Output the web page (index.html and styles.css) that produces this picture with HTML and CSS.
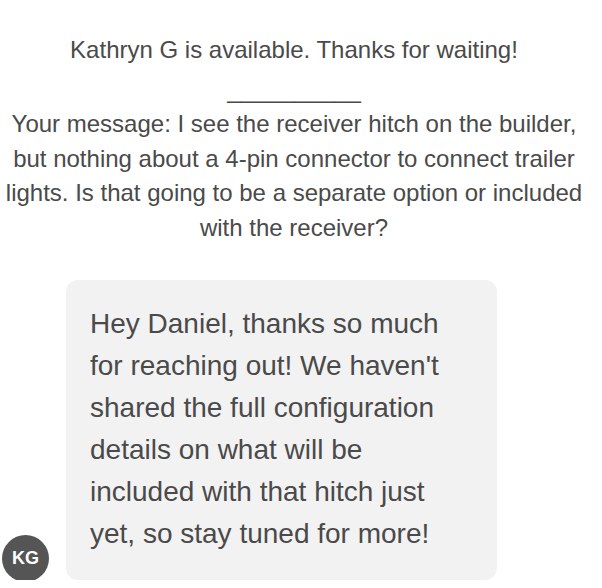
FILE: index.html
```html
<!DOCTYPE html>
<html lang="en">
<head>
    <meta charset="UTF-8">
    <meta name="viewport" content="width=device-width, initial-scale=1.0">
    <title>Chat</title>
    <link rel="stylesheet" href="styles.css">
</head>
<body>
    <!-- Aviso del sistema -->
    <div class="notice">
        <p class="notice-title">Kathryn G is available. Thanks for waiting!</p>
        <p class="notice-body">__________<br>Your message: I see the receiver hitch on the builder, but nothing about a 4-pin connector to connect trailer lights. Is that going to be a separate option or included with the receiver?</p>
    </div>

    <!-- Mensaje del agente -->
    <div class="message">
        <div class="avatar">KG</div>
        <div class="bubble">Hey Daniel, thanks so much for reaching out! We haven't shared the full configuration details on what will be included with that hitch just yet, so stay tuned for more!</div>
    </div>
</body>
</html>
```

FILE: styles.css
```css
body {
    font-family: "Liberation Sans", Arial, sans-serif;
    background: #fff;
    color: #4a4a4a;
    margin: 0;
    padding: 0;
    overflow: hidden;
}

.notice {
    width: 588px;
    text-align: center;
    font-size: 24px;
    line-height: 34.5px;
}

.notice p {
    margin: 0;
}

.notice-title {
    padding-top: 33px;
    margin-bottom: 5px !important;
}

.message {
    display: flex;
    align-items: flex-end;
    margin-top: 35px;
    padding-left: 2px;
}

.avatar {
    width: 47px;
    height: 47px;
    border-radius: 50%;
    background-color: #555;
    color: #fff;
    font-weight: bold;
    font-size: 18px;
    display: flex;
    align-items: center;
    justify-content: center;
    margin-bottom: -2px;
    flex-shrink: 0;
}

.bubble {
    margin-left: 17px;
    width: 360px;
    background-color: #f2f2f2;
    border-radius: 12px;
    padding: 23px 47px 25px 24px;
    font-size: 28px;
    line-height: 42px;
}
```
